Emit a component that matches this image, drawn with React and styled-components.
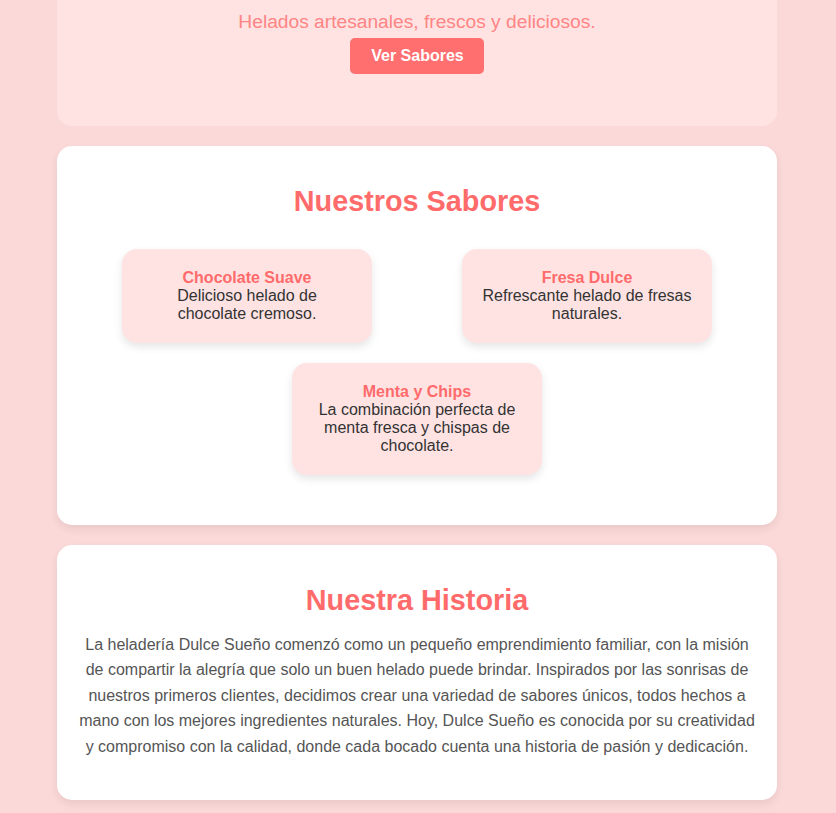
import React from 'react'
import styled, { createGlobalStyle } from 'styled-components'

const GlobalStyle = createGlobalStyle`
  body {
    margin: 0;
    padding-right: 2px;
    background: #fcd9d9;
    font-family: "Liberation Sans", Arial, sans-serif;
  }
`

const Page = styled.main`
  width: 720px;
  margin: 0 auto;
  display: flex;
  flex-direction: column;
  gap: 20px;
  padding-bottom: 20px;
`

const Hero = styled.header`
  background: #ffe3e3;
  border-radius: 0 0 15px 15px;
  padding: 11px 20px 52px;
  display: flex;
  flex-direction: column;
  align-items: center;
  gap: 5px;
`

const Tagline = styled.p`
  margin: 0;
  font-size: 19.2px;
  color: #ff8585;
`

const Button = styled.button`
  background: #ff6f6f;
  color: #fff;
  border: none;
  border-radius: 5px;
  padding: 9px 20px 9px 21px;
  font-family: inherit;
  font-size: 16px;
  font-weight: bold;
  line-height: 18px;
  cursor: pointer;
`

const Section = styled.section`
  background: #fff;
  border-radius: 15px;
  box-shadow: 0 4px 8px rgba(0, 0, 0, 0.08);
  padding: 39px 20px ${p => p.$bottom}px;
  text-align: center;
`

const Heading = styled.h2`
  margin: 0 0 ${p => p.$gap}px;
  font-size: 28.8px;
  line-height: 33px;
  color: #ff6b6b;
`

const Flavors = styled.div`
  display: flex;
  flex-wrap: wrap;
  justify-content: space-around;
  row-gap: 20px;
`

const FlavorCard = styled.div`
  width: 250px;
  box-sizing: border-box;
  padding: 20px;
  background: #ffe3e3;
  border-radius: 15px;
  box-shadow: 0 4px 8px rgba(0, 0, 0, 0.1);
  font-size: 16px;
  line-height: 18px;
`

const FlavorName = styled.h3`
  margin: 0;
  font-size: 16px;
  line-height: 18px;
  color: #ff6b6b;
`

const FlavorText = styled.p`
  margin: 0;
  color: #333;
`

const Story = styled.p`
  margin: 0;
  font-size: 16px;
  line-height: 25.4px;
  color: #555;
`

const flavors = [
  { name: 'Chocolate Suave', text: 'Delicioso helado de chocolate cremoso.' },
  { name: 'Fresa Dulce', text: 'Refrescante helado de fresas naturales.' },
  { name: 'Menta y Chips', text: 'La combinación perfecta de menta fresca y chispas de chocolate.' },
]

export default function App() {
  return (
    <>
      <GlobalStyle />
      <Page>
        <Hero>
          <Tagline>Helados artesanales, frescos y deliciosos.</Tagline>
          <Button>Ver Sabores</Button>
        </Hero>

        <Section $bottom={50}>
          <Heading $gap={31}>Nuestros Sabores</Heading>
          <Flavors>
            {flavors.map(f => (
              <FlavorCard key={f.name}>
                <FlavorName>{f.name}</FlavorName>
                <FlavorText>{f.text}</FlavorText>
              </FlavorCard>
            ))}
          </Flavors>
        </Section>

        <Section $bottom={41}>
          <Heading $gap={15}>Nuestra Historia</Heading>
          <Story>
            La heladería Dulce Sueño comenzó como un pequeño emprendimiento familiar, con la misión de
            compartir la alegría que solo un buen helado puede brindar. Inspirados por las sonrisas de
            nuestros primeros clientes, decidimos crear una variedad de sabores únicos, todos hechos a
            mano con los mejores ingredientes naturales. Hoy, Dulce Sueño es conocida por su creatividad
            y compromiso con la calidad, donde cada bocado cuenta una historia de pasión y dedicación.
          </Story>
        </Section>
      </Page>
    </>
  )
}
